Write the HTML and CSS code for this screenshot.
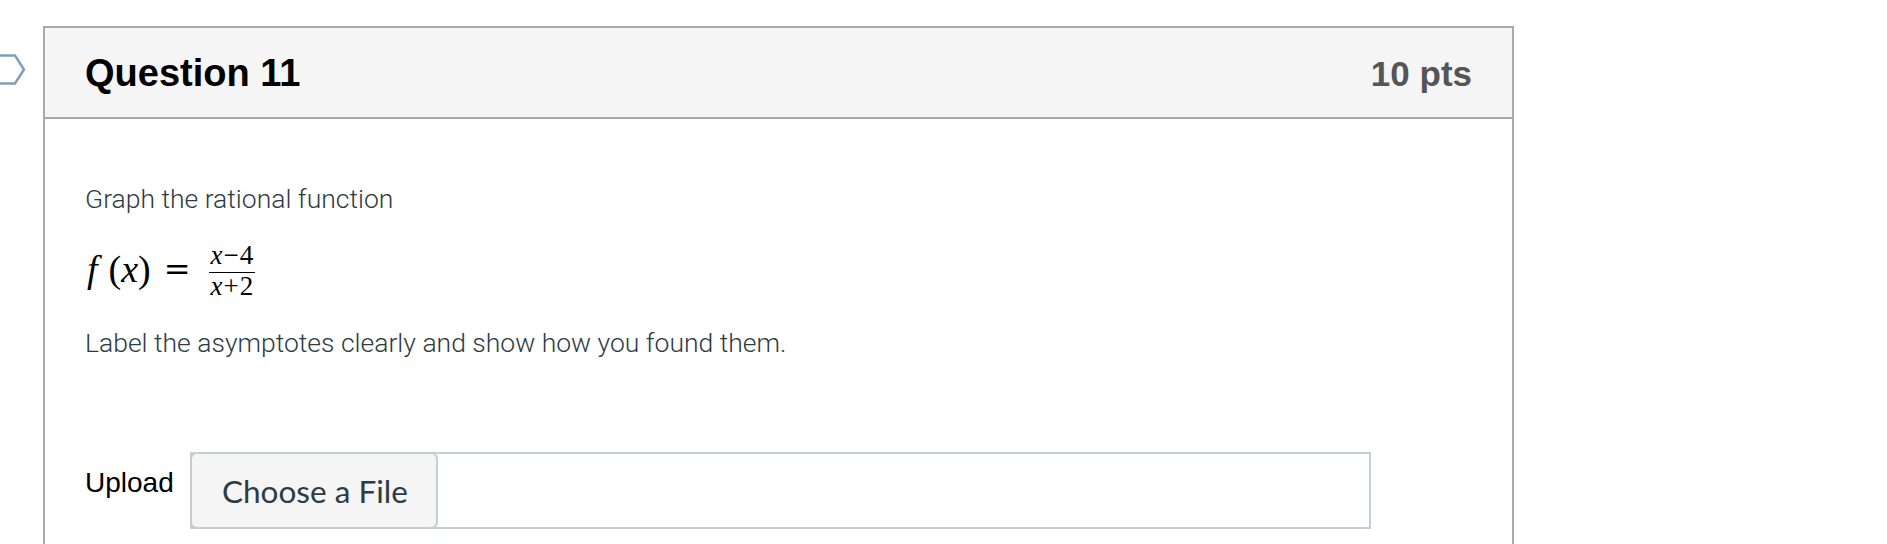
FILE: index.html
```html
<!DOCTYPE html>
<html lang="en">
<head>
<meta charset="utf-8">
<title>Question 11</title>
<link rel="stylesheet" href="styles.css">
</head>
<body>
<div class="page">
  <svg class="flag" width="43" height="32" viewBox="0 0 43 32" aria-hidden="true">
    <path d="M-6 1.5 H15 L24 15.5 L15 29.5 H-6" fill="none" stroke="#7f9cba" stroke-width="2.4" stroke-linejoin="miter"/>
  </svg>
  <div class="card">
    <div class="card-header">
      <h2 class="q-title">Question 11</h2>
      <span class="q-points">10 pts</span>
    </div>
    <div class="card-body">
      <p class="text first">Graph the rational function</p>
      <div class="math">
        <span class="mi">f</span><span class="mo paren-l">(</span><span class="mi">x</span><span class="mo">)</span><span class="mo eq">=</span>
        <span class="frac">
          <span class="num"><span class="mi">x</span><span class="op">−</span><span class="mn">4</span></span>
          <span class="den"><span class="mi">x</span><span class="op">+</span><span class="mn">2</span></span>
        </span>
      </div>
      <p class="text">Label the asymptotes clearly and show how you found them.</p>
      <div class="upload-row">
        <label class="upload-label">Upload</label>
        <div class="file-box">
          <span class="file-btn">Choose a File</span>
        </div>
      </div>
    </div>
  </div>
</div>
</body>
</html>
```

FILE: styles.css
```css
html, body {
  margin: 0;
  padding: 0;
  background: #ffffff;
}

body {
  font-family: "Liberation Sans", Arial, sans-serif;
  overflow: hidden;
}

.page {
  display: flex;
  align-items: flex-start;
  padding-top: 26px;
}

.flag {
  flex: 0 0 43px;
  margin-top: 28px;
  display: block;
}

.card {
  width: 1467px;
  border: 2px solid #aaaaaa;
}

.card-header {
  display: flex;
  align-items: center;
  justify-content: space-between;
  height: 91px;
  padding: 2px 40px 0 40px;
  box-sizing: border-box;
  background: #f5f5f5;
  border-bottom: 2px solid #aaaaaa;
}

.q-title {
  margin: 0;
  font-family: "Liberation Sans", Arial, sans-serif;
  font-weight: 700;
  font-size: 38px;
  color: #000000;
}

.q-points {
  font-family: "Liberation Sans", Arial, sans-serif;
  font-weight: 700;
  font-size: 35px;
  color: #555555;
}

.card-body {
  padding: 60px 40px 80px 40px;
}

.text {
  margin: 0;
  font-family: "Roboto", "Helvetica Neue", Arial, sans-serif;
  font-weight: 300;
  font-size: 26.5px;
  line-height: 40px;
  color: #2d3b45;
}

.math {
  display: flex;
  align-items: center;
  height: 60px;
  margin: 20px 0 24px 2px;
  font-family: "Liberation Serif", "DejaVu Serif", serif;
  font-size: 38px;
  color: #000;
}

.mi {
  font-style: italic;
}

.paren-l {
  margin-left: 11px;
}

.eq {
  margin: 0 18px 0 13px;
  font-family: "DejaVu Serif", serif;
  font-size: 32px;
}

.frac {
  display: inline-flex;
  flex-direction: column;
  align-items: stretch;
  font-size: 27px;
  line-height: 26px;
  text-align: center;
  margin-top: 2px;
}

.num {
  padding: 0 2px 4px 2px;
}

.den {
  border-top: 1.5px solid #000;
  padding: 0 2px;
}

.op {
  margin: 0 1px;
}

.upload-row {
  display: flex;
  align-items: flex-start;
  margin-top: 89px;
}

.upload-label {
  margin-top: 15px;
  width: 105px;
  font-family: "Liberation Sans", Arial, sans-serif;
  font-size: 28px;
  color: #000;
}

.file-box {
  display: flex;
  width: 1177px;
  height: 73px;
  border: 2px solid #c7cdd1;
}

.file-btn {
  display: flex;
  align-items: center;
  margin: -2px 0 -2px -2px;
  padding: 0 28px 0 30px;
  height: 73px;
  border: 2px solid #c7cdd1;
  border-radius: 7px;
  background: #f5f5f5;
  font-family: "Lato", "Noto Sans", sans-serif;
  font-size: 31.5px;
  color: #2d3b45;
}
```
